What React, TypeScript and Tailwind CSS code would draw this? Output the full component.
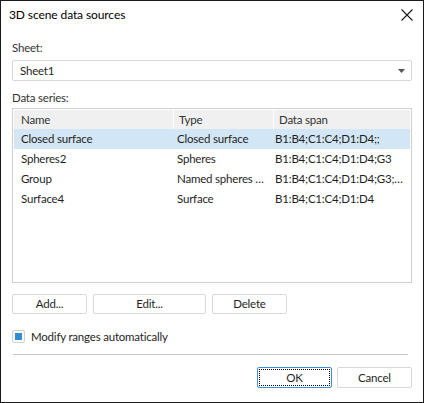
import React from "react";

const rows = [
  { name: "Closed surface", type: "Closed surface", span: "B1:B4;C1:C4;D1:D4;;", sel: true },
  { name: "Spheres2", type: "Spheres", span: "B1:B4;C1:C4;D1:D4;G3" },
  { name: "Group", type: "Named spheres …", span: "B1:B4;C1:C4;D1:D4;G3;…" },
  { name: "Surface4", type: "Surface", span: "B1:B4;C1:C4;D1:D4" },
];

function Btn({ children, className = "" }: { children: React.ReactNode; className?: string }) {
  return (
    <div
      className={`flex items-center justify-center border border-[#d9d9d9] rounded-[2px] bg-white text-[11.5px] tracking-[-0.2px] text-[#1f1f1f] ${className}`}
    >
      {children}
    </div>
  );
}

export default function App() {
  return (
    <div
      className="w-[424px] h-[403px] bg-white border border-[#1a1a1a] flex flex-col text-[#1f1f1f] overflow-hidden"
      style={{ fontFamily: 'Lato, "Noto Sans", sans-serif' }}
    >
      <div className="h-[28px] flex items-center justify-between pl-[8px] pr-[8px] shrink-0">
        <span className="text-[12px] tracking-[-0.1px] text-black leading-none">3D scene data sources</span>
        <svg width="12" height="12" viewBox="0 0 12 12" className="mr-[2px]">
          <path d="M0.5 0.5 L11.5 11.5 M11.5 0.5 L0.5 11.5" stroke="#1a1a1a" strokeWidth="1.1" />
        </svg>
      </div>
      <div className="px-[11px] flex flex-col text-[11.5px] tracking-[-0.2px]">
        <div className="mt-[11px] leading-[16px] text-[#333]">Sheet:</div>
        <div className="mt-[4px] h-[21px] border border-[#d9d9d9] rounded-[2px] flex items-center justify-between pl-[7px] pr-[6px]">
          <span className="text-[#1f1f1f]">Sheet1</span>
          <svg width="7" height="4" viewBox="0 0 7 4">
            <path d="M0 0 H7 L3.5 4 Z" fill="#555" />
          </svg>
        </div>
        <div className="mt-[9px] leading-[16px] text-[#333]">Data series:</div>
        <div className="mt-[2px] h-[175px] border border-[#d0d0d0] p-[1px] flex flex-col">
          <div className="h-[19px] bg-[#f0f0f0] flex text-[#333] shrink-0">
            <div className="w-[160px] shrink-0 pl-[7px] flex items-center border-r border-white">Name</div>
            <div className="w-[100px] shrink-0 pl-[5px] flex items-center border-r border-white">Type</div>
            <div className="flex-1 pl-[5px] flex items-center">Data span</div>
          </div>
          {rows.map((r) => (
            <div
              key={r.name}
              className={`h-[20px] shrink-0 flex items-center text-[#1f1f1f] ${r.sel ? "bg-[#d2e6f5]" : ""}`}
            >
              <div className="w-[160px] shrink-0 pl-[7px] whitespace-nowrap">{r.name}</div>
              <div className="w-[100px] shrink-0 pl-[3px] whitespace-nowrap">{r.type}</div>
              <div className="flex-1 pl-[1px] whitespace-nowrap">{r.span}</div>
            </div>
          ))}
        </div>
        <div className="mt-[11px] flex gap-[6px]">
          <Btn className="w-[75px] h-[20px]">Add...</Btn>
          <Btn className="w-[113px] h-[20px]">Edit...</Btn>
          <Btn className="w-[75px] h-[20px]">Delete</Btn>
        </div>
        <div className="mt-[16px] flex items-center gap-[6px]">
          <div className="w-[13px] h-[13px] border border-[#d0d0d0] rounded-[2px] flex items-center justify-center">
            <div className="w-[7px] h-[7px] bg-[#2f8fd6]" />
          </div>
          <span className="text-[#1f1f1f] leading-[13px]">Modify ranges automatically</span>
        </div>
        <div className="mt-[11px] ml-[1px] mr-[4px] h-px bg-[#c8c8c8]" />
        <div className="mt-[12px] flex justify-end gap-[5px]">
          <div className="w-[75px] h-[21px] border border-[#3c8fd9] rounded-[2px] p-[1px]">
            <div className="w-full h-full border border-dotted border-black flex items-center justify-center">
              OK
            </div>
          </div>
          <Btn className="w-[75px] h-[21px]">Cancel</Btn>
        </div>
      </div>
    </div>
  );
}
